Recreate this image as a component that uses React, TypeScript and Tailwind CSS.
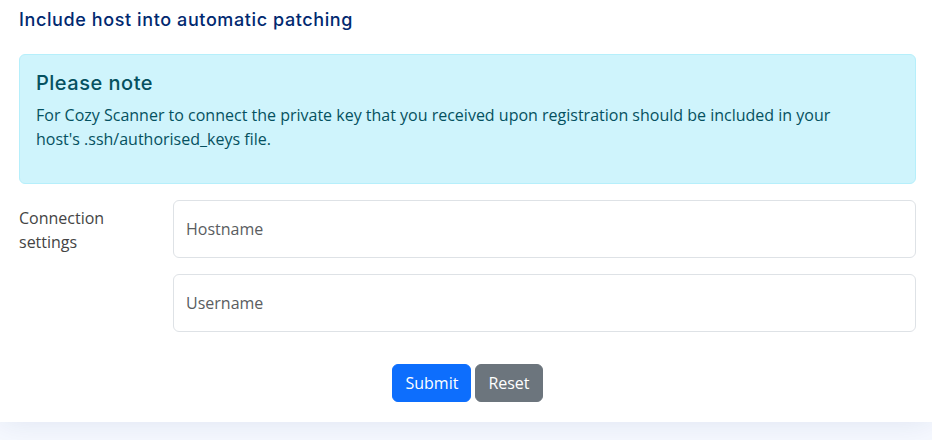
export default function App() {
  return (
    <div className="min-h-[440px] bg-[#f6f9ff] font-['Open_Sans',sans-serif] text-[#444444]">
      <div className="bg-white shadow-[0_0_30px_rgba(1,41,112,0.1)] pl-[19px] pr-[16px] pb-[20px]">
        <h5 className="font-['Inter',sans-serif] text-[18px] tracking-[0.6px] font-medium leading-[20px] text-[#012970] pt-[10px] pb-[24px]">
          Include host into automatic patching
        </h5>

        <div className="rounded-[6px] border border-[#b6effb] bg-[#cff4fc] p-4 text-[#055160]">
          <h4 className="font-['Inter',sans-serif] text-[20px] tracking-[0.5px] font-medium leading-[24px] mb-2">
            Please note
          </h4>
          <p className="text-base leading-6 mb-4">
            For Cozy Scanner to connect the private key that you received upon registration should be included in your
            <br />
            host's .ssh/authorised_keys file.
          </p>
        </div>

        <div className="flex mt-[16px]">
          <div className="w-[154px] pt-[6px] text-base leading-6 pr-4">Connection settings</div>
          <div className="flex-1 flex flex-col gap-4">
            <Field label="Hostname" />
            <Field label="Username" />
          </div>
        </div>

        <div className="flex justify-center gap-1 mt-[32px]">
          <button className="h-[38px] px-3 rounded-[6px] border border-[#0d6efd] bg-[#0d6efd] text-white text-base">
            Submit
          </button>
          <button className="h-[38px] px-3 rounded-[6px] border border-[#6c757d] bg-[#6c757d] text-white text-base">
            Reset
          </button>
        </div>
      </div>
    </div>
  );
}

function Field({ label }: { label: string }) {
  return (
    <div className="h-[58px] rounded-[6px] border border-[#dee2e6] bg-white flex items-center px-3">
      <span className="text-base text-[#5a5d61]">{label}</span>
    </div>
  );
}
